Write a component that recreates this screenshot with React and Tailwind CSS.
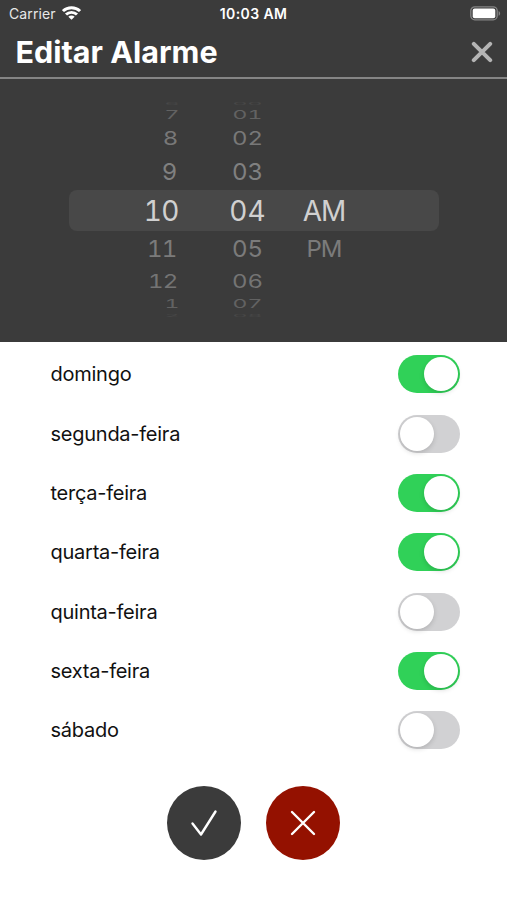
import React, { useState } from "react";

const DAYS = [
  { name: "domingo", active: true },
  { name: "segunda-feira", active: false },
  { name: "terça-feira", active: true },
  { name: "quarta-feira", active: true },
  { name: "quinta-feira", active: false },
  { name: "sexta-feira", active: true },
  { name: "sábado", active: false },
];

// One entry per visible row of the wheel, flattened towards both ends
const WHEEL = [
  { hour: "6", minute: "00", row: "h-1", pad: "", text: "text-[23px] text-[#484848] scale-y-[0.15]" },
  { hour: "7", minute: "01", row: "h-[18px]", pad: "", text: "text-[23px] text-[#626262] scale-y-[0.52]" },
  { hour: "8", minute: "02", row: "h-[30px]", pad: "pr-px", text: "text-[24px] text-[#787878] scale-y-[0.78]" },
  { hour: "9", minute: "03", row: "h-9", pad: "pr-[2px]", text: "text-[24px] text-[#808080] scale-y-[0.98]" },
  { hour: "10", minute: "04", period: "AM", row: "h-[41px]", pad: "", text: "text-[28px] text-[#d0d0d0]" },
  { hour: "11", minute: "05", period: "PM", row: "h-9", pad: "pr-[2px]", text: "text-[24px] text-[#7b7b7b] scale-y-[0.98]" },
  { hour: "12", minute: "06", row: "h-[30px]", pad: "pr-px", text: "text-[24px] text-[#747474] scale-y-[0.78]" },
  { hour: "1", minute: "07", row: "h-[15px]", pad: "", text: "text-[23px] text-[#626262] scale-y-[0.52]" },
  { hour: "2", minute: "08", row: "h-2", pad: "", text: "text-[23px] text-[#484848] scale-y-[0.15]" },
];

function StatusBar() {
  return (
    <div className="flex h-[27px] items-center justify-between pl-[9px] pr-[6px] text-[14px] text-[#e8e8e8]">
      <div className="flex w-40 items-center gap-[6px]">
        <span className="tracking-[0.1px]">Carrier</span>
        <svg width="19" height="14" viewBox="0 0 18 14" preserveAspectRatio="none" className="-mt-[2px]" fill="none" stroke="#fff" strokeWidth="2.8">
          <path d="M0.9 5.1a11.5 11.5 0 0 1 16.2 0" />
          <path d="M3.8 8.6a7.4 7.4 0 0 1 10.4 0" />
          <path d="M9 13.8l-3-3.1a4.2 4.2 0 0 1 6 0z" fill="#fff" stroke="none" />
        </svg>
      </div>
      <span className="text-[14px] font-semibold tracking-[0.4px] text-white">10:03 AM</span>
      <div className="flex w-[163px] justify-end">
        <svg width="31" height="15" viewBox="0 0 31 15" fill="none">
          <rect x="0.8" y="0.8" width="26.4" height="13" rx="4" stroke="#858585" strokeWidth="1.3" />
          <rect x="2.7" y="2.4" width="22.6" height="9.8" rx="2" fill="#fff" />
          <path d="M28.6 5v4.8c2-.8 2-4 0-4.8z" fill="#858585" />
        </svg>
      </div>
    </div>
  );
}

function TimePicker() {
  return (
    <div className="flex h-[263px] flex-col items-center pt-[23px] tabular-nums">
      {WHEEL.map((item) => (
        <div
          key={item.hour}
          className={`flex w-[370px] items-center leading-none ${item.row} ${item.period === "AM" ? "rounded-lg bg-[#484848]" : ""}`}
        >
          <span className={`flex h-full w-[110px] items-center justify-end tracking-[-0.8px] ${item.text}`}>
            <span className={item.pad}>{item.hour}</span>
          </span>
          <span className={`flex h-full w-[87px] items-center justify-end ${item.text}`}>
            <span className="flex w-[36px] justify-center">{item.minute}</span>
          </span>
          <span className={`flex h-full items-center pl-[38px] ${item.text}`}>
            <span className="flex w-[41px] justify-center tracking-[-1px]">{item.period}</span>
          </span>
        </div>
      ))}
    </div>
  );
}

function Toggle({ checked, onChange, label }) {
  return (
    <button
      type="button"
      role="switch"
      aria-checked={checked}
      aria-label={label}
      onClick={onChange}
      className={`flex h-[38px] w-[62px] items-center rounded-full px-[2px] ${checked ? "justify-end bg-[#30d158]" : "justify-start bg-[#d1d1d3]"}`}
    >
      <span className="size-[34px] rounded-full bg-white shadow-[0_2px_5px_rgba(0,0,0,0.15)]" />
    </button>
  );
}

export default function App() {
  const [days, setDays] = useState(DAYS);

  const toggleDay = (name) => {
    setDays(days.map((d) => (d.name === name ? { ...d, active: !d.active } : d)));
  };

  return (
    <div className="h-[900px] w-[507px] overflow-hidden bg-white font-['Inter','Liberation_Sans',sans-serif]">
      <div className="h-[342px] bg-[#3b3b3b]">
        <StatusBar />
        <div className="flex h-[52px] items-center justify-between border-b-2 border-[#858585] pl-[15.5px] pr-[14px]">
          <h1 className="text-[30.5px] font-bold leading-none text-white">Editar Alarme</h1>
          <button type="button" aria-label="Fechar">
            <svg width="22" height="22" viewBox="0 0 22 22" stroke="#b4b4b4" strokeWidth="4" strokeLinecap="round">
              <path d="M2.8 2.8l16.4 16.4M19.2 2.8L2.8 19.2" />
            </svg>
          </button>
        </div>
        <TimePicker />
      </div>

      <div className="flex flex-col pl-[50.5px] pr-[47px] pt-[2.7px]">
        {days.map((day) => (
          <div key={day.name} className="flex h-[59.3px] items-center justify-between">
            <span className="text-[20px] tracking-[-0.25px] text-[#111]">{day.name}</span>
            <Toggle checked={day.active} onChange={() => toggleDay(day.name)} label={day.name} />
          </div>
        ))}
      </div>

      <div className="flex justify-center gap-[25px] pt-[26.2px]">
        <button type="button" aria-label="Salvar" className="flex size-[74px] items-center justify-center rounded-full bg-[#3b3b3b]">
          <svg width="28" height="28" viewBox="0 0 28 28" fill="none" stroke="#fff" strokeWidth="2.4" strokeLinecap="round" strokeLinejoin="round">
            <path d="M2.5 14.5l8.5 11L25.5 2.5" />
          </svg>
        </button>
        <button type="button" aria-label="Cancelar" className="flex size-[74px] items-center justify-center rounded-full bg-[#941100]">
          <svg width="28" height="28" viewBox="0 0 28 28" fill="none" stroke="#fff" strokeWidth="2.4" strokeLinecap="round">
            <path d="M3 3l22 22M25 3L3 25" />
          </svg>
        </button>
      </div>
    </div>
  );
}
